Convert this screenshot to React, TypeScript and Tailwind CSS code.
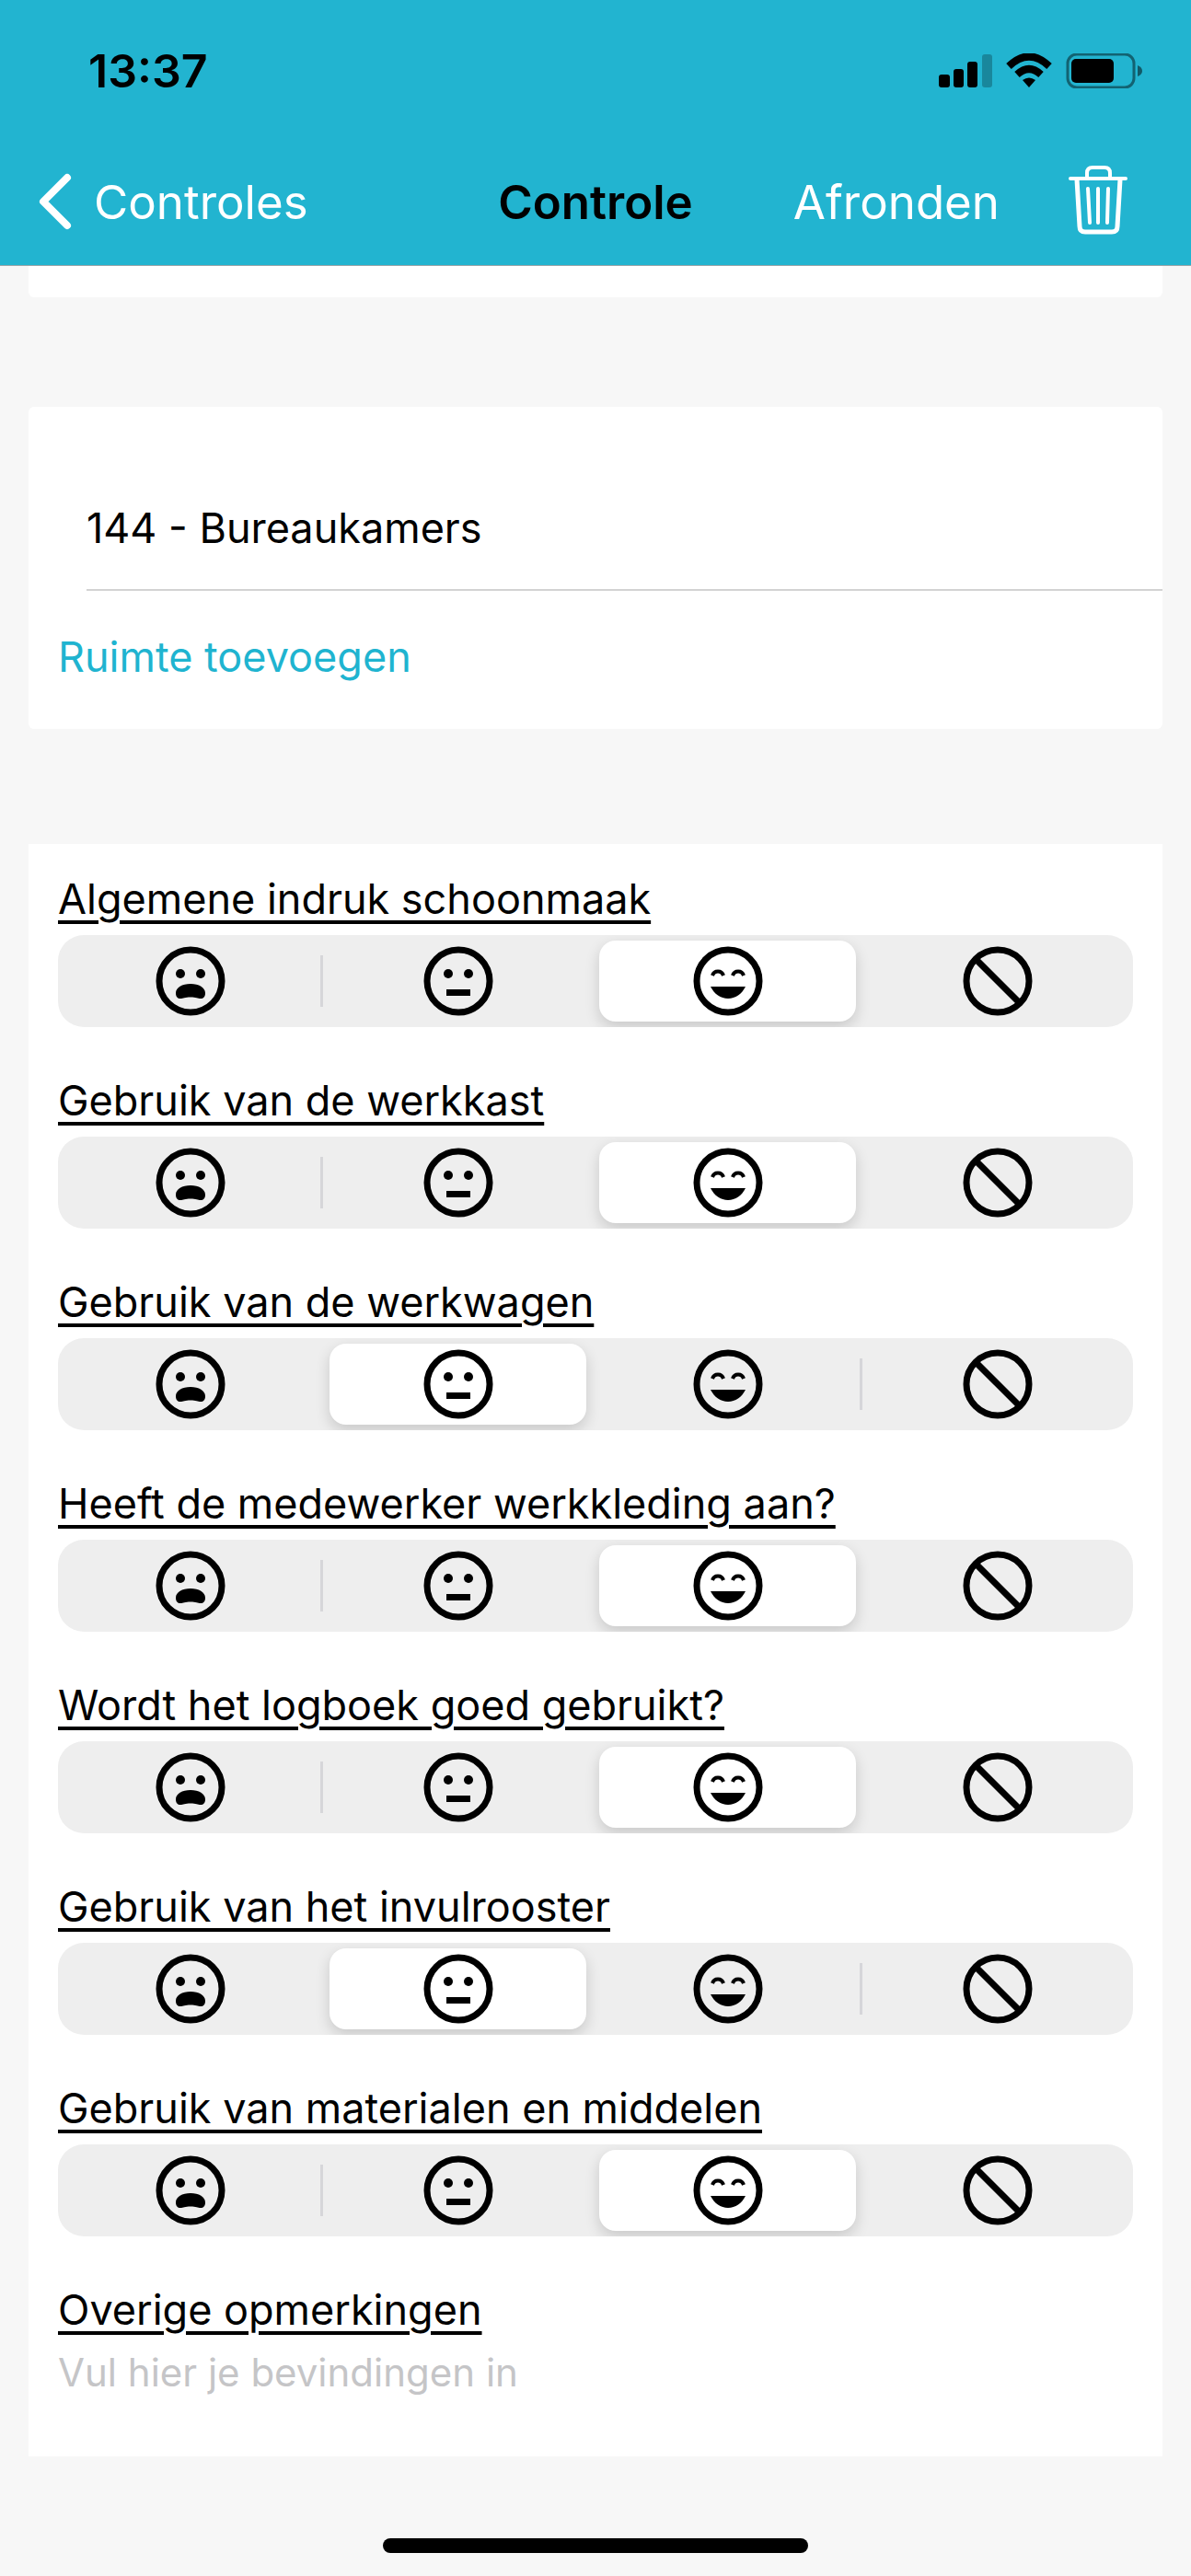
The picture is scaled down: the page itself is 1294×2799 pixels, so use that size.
import { useState } from 'react';

type IconProps = { className?: string };

const ratings = [
    { name: 'Slecht', Icon: SadIcon },
    { name: 'Matig', Icon: NeutralIcon },
    { name: 'Goed', Icon: HappyIcon },
    { name: 'Niet van toepassing', Icon: BanIcon },
];

const questions = [
    { id: 'indruk', title: 'Algemene indruk schoonmaak', rating: 2 },
    { id: 'werkkast', title: 'Gebruik van de werkkast', rating: 2 },
    { id: 'werkwagen', title: 'Gebruik van de werkwagen', rating: 1 },
    { id: 'werkkleding', title: 'Heeft de medewerker werkkleding aan?', rating: 2 },
    { id: 'logboek', title: 'Wordt het logboek goed gebruikt?', rating: 2 },
    { id: 'invulrooster', title: 'Gebruik van het invulrooster', rating: 1 },
    { id: 'materialen', title: 'Gebruik van materialen en middelen', rating: 2 },
];

function SadIcon({ className }: IconProps) {
    return (
        <svg viewBox="-38 -38 76 76" className={className} aria-hidden="true">
            <circle r="34" fill="none" stroke="currentColor" strokeWidth="7" />
            <circle cx="-11" cy="-8" r="5" />
            <circle cx="11" cy="-8" r="5" />
            <path d="M0 3C-9 3-16 7-16 13C-16 17-14 19-11 19C-8 19-6 17.500 0 17.500C6 17.500 8 19 11 19C14 19 16 17 16 13C16 7 9 3 0 3Z" />
        </svg>
    );
}

function NeutralIcon({ className }: IconProps) {
    return (
        <svg viewBox="-38 -38 76 76" className={className} aria-hidden="true">
            <circle r="34" fill="none" stroke="currentColor" strokeWidth="7" />
            <circle cx="-11" cy="-8" r="5" />
            <circle cx="11" cy="-8" r="5" />
            <rect x="-13" y="9" width="26" height="7" />
        </svg>
    );
}

function HappyIcon({ className }: IconProps) {
    return (
        <svg viewBox="-38 -38 76 76" className={className} aria-hidden="true">
            <circle r="34" fill="none" stroke="currentColor" strokeWidth="7" />
            <path d="M-17-6C-15-12-7-12-5-6M5-6C7-12 15-12 17-6" fill="none" stroke="currentColor" strokeWidth="4" />
            <path d="M-19 6H19C15 14 8 19 0 19C-8 19-15 14-19 6Z" />
        </svg>
    );
}

function BanIcon({ className }: IconProps) {
    return (
        <svg viewBox="-38 -38 76 76" className={className} aria-hidden="true">
            <g fill="none" stroke="currentColor" strokeWidth="7">
                <circle r="34" />
                <path d="M-24-24L24 24" />
            </g>
        </svg>
    );
}

function TrashIcon({ className }: IconProps) {
    return (
        <svg viewBox="0 2 66 76" className={className} fill="none" stroke="currentColor" strokeLinecap="round" aria-hidden="true">
            <path d="M3 17H63" strokeWidth="4" />
            <path d="M21 16V11Q21 5 27 5H40Q46 5 46 11V16" strokeWidth="4" />
            <path d="M10 18L13 69Q13 75 19 75H48Q54 75 54 69L57 18" strokeWidth="5" />
            <path d="M22 28L24 65M33 28V65M44 28L43 65" strokeWidth="4" />
        </svg>
    );
}

function StatusBar() {
    return (
        <div className="flex h-[154px] items-center justify-between pr-[52px] pl-24 text-black">
            <span className="text-[50px] leading-none font-semibold">13:37</span>
            <div className="flex items-center gap-[15px]">
                <svg viewBox="0 0 58 38" className="h-[38px] w-[58px]" aria-hidden="true">
                    <rect x="0" y="23" width="12" height="14" rx="3" />
                    <rect x="16" y="17" width="11" height="20" rx="3" />
                    <rect x="31" y="9" width="11" height="28" rx="3" />
                    <rect x="47" y="1" width="11" height="36" rx="3" opacity=".25" />
                </svg>
                <svg viewBox="0 0 50 38" className="h-[38px] w-[50px]" fill="none" stroke="#000" aria-hidden="true">
                    <path d="M3 14Q25-7 47 14" strokeWidth="8" />
                    <path d="M12 23Q25 11 38 23" strokeWidth="8" />
                    <path d="M18 29Q25 24 32 29L25 37Z" fill="#000" stroke="none" />
                </svg>
                <svg viewBox="0 0 84 38" className="h-[38px] w-[84px]" aria-hidden="true">
                    <rect x="2" y="1" width="72" height="36" rx="10" fill="none" stroke="#000" strokeWidth="3" opacity=".45" />
                    <rect x="6" y="6" width="46" height="26" rx="5" />
                    <path d="M78 13Q83 15 83 19Q83 23 78 25Z" opacity=".5" />
                </svg>
            </div>
        </div>
    );
}

function NavBar() {
    return (
        <nav className="grid h-[134px] grid-cols-[1fr_auto_1fr] items-center px-[42px] pb-1 text-[51px] leading-none">
            <a href="#controles" className="flex items-center gap-6 text-white">
                <svg viewBox="0 0 36 62" className="h-[62px] w-9" fill="none" stroke="currentColor" strokeWidth="8" strokeLinecap="round" strokeLinejoin="round" aria-hidden="true">
                    <path d="M31 5L5 31L31 57" />
                </svg>
                Controles
            </a>
            <h1 className="font-semibold text-black">Controle</h1>
            <div className="flex items-center justify-end gap-[74px] pr-[26px] text-white">
                <button type="button">Afronden</button>
                <button type="button" aria-label="Verwijderen" className="pb-1">
                    <TrashIcon className="h-[76px] w-[66px]" />
                </button>
            </div>
        </nav>
    );
}

type RatingProps = {
    id: string;
    title: string;
    value: number;
    onChange: (value: number) => void;
};

function Rating({ id, title, value, onChange }: RatingProps) {
    return (
        <fieldset className="pb-[41px]">
            <legend className="text-[45px] leading-[78px] underline decoration-4 underline-offset-[7px]">{title}</legend>
            <div className="grid h-[100px] grid-cols-[288fr_293fr_293fr_294fr] overflow-hidden rounded-[28px] bg-[#eeeeee]">
                {ratings.map(({ name, Icon }, i) => {
                    const hasDivider = i < 3 && value !== i && value !== i + 1;
                    return (
                        <label key={name} className="relative flex items-center px-[7px] py-[6px]">
                            <input
                                type="radio"
                                name={id}
                                aria-label={name}
                                className="peer sr-only"
                                checked={value === i}
                                onChange={() => onChange(i)}
                            />
                            <span className="flex h-full flex-1 items-center justify-center rounded-[18px] peer-checked:bg-white peer-checked:shadow-[0_6px_16px_rgba(0,0,0,0.16)]">
                                <Icon className="size-[76px]" />
                            </span>
                            {hasDivider && <span className="absolute right-0 h-14 w-[3px] bg-[#d6d6d9]" />}
                        </label>
                    );
                })}
            </div>
        </fieldset>
    );
}

export default function App() {
    const [values, setValues] = useState(questions.map((q) => q.rating));

    return (
        <div className="flex min-h-screen flex-col bg-[#f7f7f7] font-['Inter','Liberation_Sans',sans-serif] text-black">
            <header className="border-b border-[#9aa5a8] bg-[#22b4d0]">
                <StatusBar />
                <NavBar />
            </header>

            <main className="flex-1 px-[31px]">
                <div className="h-[34px] rounded-b-md bg-white" />

                <section className="mt-[119px] rounded-md bg-white pt-[88px] pb-11">
                    <div className="ml-[63px] border-b-2 border-[#d3d3d3] pb-[22px] text-[45px] leading-[88px]">
                        144 - Bureaukamers
                    </div>
                    <button type="button" className="mt-[38px] ml-8 block text-[45px] leading-[68px] text-[#1fb4d0]">
                        Ruimte toevoegen
                    </button>
                </section>

                <section className="mt-[125px] bg-white px-8 pt-[21px] pb-16">
                    {questions.map((q, i) => (
                        <Rating
                            key={q.id}
                            id={q.id}
                            title={q.title}
                            value={values[i]}
                            onChange={(value) => setValues(values.map((v, j) => (j === i ? value : v)))}
                        />
                    ))}
                    <label htmlFor="opmerkingen" className="block text-[45px] leading-[78px] underline decoration-4 underline-offset-[7px]">
                        Overige opmerkingen
                    </label>
                    <input
                        id="opmerkingen"
                        type="text"
                        placeholder="Vul hier je bevindingen in"
                        className="block h-14 w-full text-[42px] placeholder:text-[#c5c5c7] focus:outline-none"
                    />
                </section>
            </main>

            <div className="mx-auto mt-20 mb-[25px] h-4 w-[462px] rounded-full bg-black" />
        </div>
    );
}
